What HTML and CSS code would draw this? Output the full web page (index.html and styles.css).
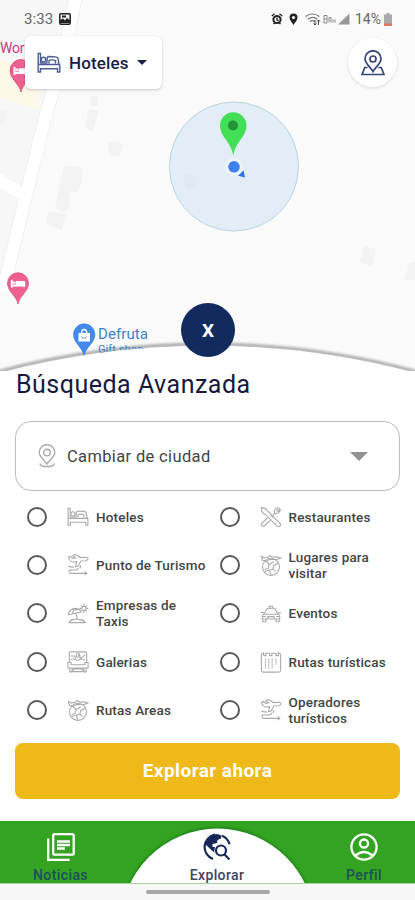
FILE: index.html
```html
<!DOCTYPE html>
<html lang="es">
<head>
<meta charset="utf-8">
<meta name="viewport" content="width=device-width, initial-scale=1">
<title>Búsqueda Avanzada</title>
<link rel="stylesheet" href="styles.css">
</head>
<body>
<svg class="defs" width="0" height="0" aria-hidden="true">
  <symbol id="bed" viewBox="0 0 24 22">
    <path d="M1.2 1.5v18.5h2.300v-3.300h17v3.300h2.300v-6.800q0-1-1-1.600l-.6-4.600q-.4-2-2.400-2.100L11.500 4.500q-1 0-1.200 1.200L9.800 11H3.500V1.500z"/>
    <circle cx="6.500" cy="7.600" r="2.300"/><path d="M1.500 12.500h21M12 8.300q3.500-1 6.500.4v2.700M12 11.400V8.300"/>
  </symbol>
  <symbol id="plane" viewBox="0 0 24 24">
    <path d="M1.500 3.500l2.200-.8 2.800 2 2.800-.5L6.500 1.600l2.400-1 6 3.300 5.800-.4q2.300.4 2.300 1.800t-2.600 2l-5.200.4-3.400 5.600-2.500.4 1.400-5.400-4.300.4q-2 0-3-1.700z"/>
    <path d="M14.500 12v3.500M1.500 13.500l6 .8M2 17.500h7.500q3-.1 3-2.500M3 17.500q-2 1.900.5 3.600H21M19.200 19.200l2.600 1.900-2.600 1.900"/>
  </symbol>
  <symbol id="beach" viewBox="0 0 24 24">
    <path d="M1.500 14q1-6.500 8-7 5 .6 6 3.700L9 12.300zM5.500 13l2-4.200 4.500-.6M9.800 12.300l1.700 7M2.500 22.500q1.500-3.500 5-3.200 2-1.500 5 0 5-.6 7.500 3.200zM18.500 2v2.300M18.500 9.700V12M13.700 7H16M21 7h2.300M15.200 3.700l1.600 1.600M20.200 8.700l1.600 1.600M21.800 3.700l-1.600 1.600"/><circle cx="18.500" cy="7" r="2.300"/>
  </symbol>
  <symbol id="gallery" viewBox="0 0 24 24">
    <path d="M2.500 13V2.500q0-1.500 1.500-1.500h16q1.500 0 1.500 1.500V13M4 5.500h4l2 2.500M12 4l3 4 5-4M4 9.500l4-1 3 2 4-2 5 1.500"/><circle cx="12" cy="4.800" r="2"/>
    <path d="M1 12.500h3.500V15h15v-2.500H23v6H1zM3 18.500v4.300h2.500v-4.300M18.500 18.500v4.300H21v-4.300M5.500 22.500l2-3h9l2 3z"/>
  </symbol>
  <symbol id="globe" viewBox="0 0 24 24">
    <circle cx="12" cy="14" r="9.300"/>
    <path d="M1.500 2.500l3 1.800 4.500-.8 2-2 2 1.700 6-.2 3.500 1.500-4 1.500-8-.2-3 1.800-5-.8zM6 7.500l4 4-1 4-4 1.500M10 11.500l5-3M20 10l-5 2.500-1 4 3 2.500M5 19l5-1.500 2 5M14 16.500l-3 1"/>
  </symbol>
  <symbol id="cutlery" viewBox="0 0 24 24">
    <path d="M1.500 1.800q4.500 0 6.500 3.200L22 19.200q1 1.500-.4 2.700t-2.800 0L6 9.500Q1.500 8 1.500 1.800zM14 10l2-2q-1-3 1-4.800l3-2M22.800 4l-2.200 3q-1.800 1.800-4.500 1.200M18 5.500l3.500-3.500M19.300 6.500l3-3.200M14.500 12.500l-2.800-2.700M11 15.800l-6.200 6q-1.500 1.200-2.800-.1t0-2.800L8.300 13"/>
  </symbol>
  <symbol id="car" viewBox="0 0 24 24">
    <path d="M4.500 13l2.800-5q.7-1.200 2-1.200h5.400q1.300 0 2 1.200l2.800 5M10 6.500V4.700h4v1.800M1 11.500h2.500l1.500 1.800h14l1.500-1.800H23M4.500 13Q2.500 13.500 2.500 15.500v3h19v-3q0-2-2-2.500M3 18.500v3h3.500v-3M17.500 18.500v3H21v-3M3 15.800h3.500M17.500 15.800H21M8.500 18.500v-2.500h7v2.500"/>
  </symbol>
  <symbol id="calendar" viewBox="0 0 24 24">
    <path d="M4 2.500H3.500q-2 0-2 2V21q0 2 2 2h17q2 0 2-2V4.500q0-2-2-2H20M4 1v4h2.500V2.500h4V5H13V2.500h4.500V5H20V1"/><path stroke-dasharray="2 1" d="M6 8.500V19M9.700 8.500V19M13.300 8.500V19M17.500 8.500V15"/>
  </symbol>
  <symbol id="pin-bed" viewBox="0 0 24 34">
    <path d="M12 33C10.500 25 1 20 1 11.500a11 11 0 0 1 22 0C23 20 13.500 25 12 33z" fill="#ee6090" stroke="#d7447a" stroke-width=".7"/>
    <path d="M5.500 8v8M5.500 14h13M18.500 15.500v-5h-8v3" fill="none" stroke="#fff" stroke-width="2"/><path d="M10 9.500h8v4h-8z" fill="#fff"/><circle cx="7.800" cy="11" r="1.400" fill="#fff"/>
  </symbol>
</svg>

<div class="screen">
  <section class="map">
    <svg class="map-canvas" viewBox="0 0 415 371">
      <defs><filter id="soft" x="-5%" y="-50%" width="110%" height="200%"><feGaussianBlur stdDeviation="1.100"/></filter></defs>
      <rect width="415" height="371" fill="#fafafa"/>
      <path d="M0 0H72Q62 55 45 108L0 290z" fill="#f7f7f7"/>
      <path d="M0 60L38 68 40 110 0 98z" fill="#fdf9e8"/>
      <path d="M76 -5Q66 55 46 114L3 290" fill="none" stroke="#f0f0f0" stroke-width="14"/>
      <path d="M76 -5Q66 55 46 114L3 290M-3 179L22 194" fill="none" stroke="#fff" stroke-width="12"/>
      <g fill="#f3f3f4">
        <path d="M88 110h11l-6 21-8-3zM108 143l7-2 8 3-3 12-11-1zM64 167q7-3 18 1v13l-5 12-8-2 1 17-7 4-8-5zM48 212l18 2-4 16-16-6zM0 110h6v13H0zM364 246l12 3-4 17-12-4zM410 262h5v18h-11zM90 98q4-6 8 0v8h-8z"/>
      </g>
      <circle cx="234" cy="166.500" r="64.500" fill="#e2edf7" stroke="#b9d5dd"/>
      <path d="M183 177l6-3 8 3-2 10-9 1z" fill="#dde8f1"/>
      <path d="M233.300 156C231.500 142 220 137 220 125.500a13.200 13.200 0 0 1 26.500 0C246.500 137 235 142 233.300 156z" fill="#43df57"/>
      <circle cx="233" cy="125.500" r="5" fill="#249336"/>
      <circle cx="234" cy="167" r="9" fill="#eff4f9"/>
      <circle cx="234" cy="166.800" r="5.800" fill="#3d82ef"/>
      <path d="M243.500 170.500l1.500 7-7-1.700z" fill="#2d73e9"/>
      <use href="#pin-bed" x="9" y="59" width="24" height="34"/>
      <use href="#pin-bed" x="6.500" y="272" width="23" height="33"/>
      <path d="M-4 372.500A807 807 0 0 1 419 372.500" fill="none" stroke="#b4b4b4" stroke-width="4" filter="url(#soft)"/>
      <path d="M84 356C82.500 347 73.500 343 73.500 334.500a10.700 10.700 0 0 1 21.400 0C95 343 85.500 347 84 356z" fill="#4389ee" stroke="#2f75d8" stroke-width=".6"/>
      <path d="M78.500 333h11.500v8.500H78.500z" fill="#fff"/>
      <path d="M81.500 334q0-4.500 2.700-4.500t2.700 4.500" fill="none" stroke="#fff" stroke-width="1.300"/>
      <path d="M81.500 336.500q2.700 3.500 5.400 0" fill="none" stroke="#4389ee"/>
    </svg>
    <span class="place place-wor">Wor</span>
    <p class="place place-shop">Defruta<small>Gift shop</small></p>

    <header class="status">
      <span class="clock">3:33</span>
      <svg class="shot" viewBox="0 0 12 12"><rect x=".8" y=".8" width="10.400" height="10.400" rx="1" fill="#eee" stroke="#222" stroke-width="1.500"/><path d="M1 10V7l3-1.500 2 2L8 5l3 2.500V10zM3 2.500h4v2H3z" fill="#222"/></svg>
      <span class="spacer"></span>
      <svg class="st-icons" viewBox="0 0 80 14">
        <circle cx="6" cy="7.500" r="3.600" fill="none" stroke="#222" stroke-width="2"/><path d="M.8 4L3.500 1.800M11.200 4L8.500 1.800M2.500 12l1.200-1.300M9.500 12l-1.200-1.300M6 5.500V8l1.800.6" stroke="#222" stroke-width="1.300" fill="none"/>
        <path d="M22.500 13C21 10 18.500 8.500 18.500 5.500a4 4 0 0 1 8 0C26.500 8.500 24 10 22.500 13z" fill="#222"/><circle cx="22.500" cy="5.500" r="1.600" fill="#fff"/>
        <g fill="none" stroke="#777" stroke-width="1.200"><path d="M34.500 4.500q7-5 14 0M36.800 7.200q5-3.500 9.500 0M39 9.500q2.500-1.700 5 0"/></g><path d="M44 8v5M42.500 11.500L44 13l1.500-1.500M47.500 13V8M46 9.500L47.500 8 49 9.500" stroke="#444" fill="none"/>
        <path d="M53 3.500h3v3.500h-3zM53 7v4h3V7M58 10.500V5.500h2v5M62 10.500v-3M64 10.500v-3" stroke="#888" fill="none"/>
        <path d="M67 12.500L78.500 1.500v11z" fill="#999"/>
      </svg>
      <span class="pct">14%</span>
      <svg class="battery" viewBox="0 0 8 13"><path d="M2.500 0h3v1.500H8V13H0V1.500h2.500z" fill="#aaa"/><path d="M0 10.500h8V13H0z" fill="#e4765d"/></svg>
    </header>

    <div class="controls">
      <button class="category">
        <svg class="cat-bed"><use href="#bed"/></svg>
        <span>Hoteles</span>
        <svg class="caret" viewBox="0 0 10 5"><path d="M0 0h10L5 5z"/></svg>
      </button>
      <button class="locate" aria-label="Mi ubicación">
        <svg viewBox="0 0 24 26"><path d="M12 21.500C10.500 18 4 14 4 8.800a8 8 0 0 1 16 0C20 14 13.500 18 12 21.500z"/><circle cx="12" cy="9" r="3"/><path d="M6.500 17.500H3.800L1 24.500h22l-2.800-7h-2.700"/></svg>
      </button>
    </div>

    <svg class="curve" viewBox="0 0 415 40">
      <path d="M-4 36A807 807 0 0 1 419 36V40H-4z" fill="#fff"/>
    </svg>
    <button class="close" aria-label="Cerrar">X</button>
  </section>

  <main class="sheet">
    <h1>Búsqueda Avanzada</h1>
    <div class="select">
      <svg class="city" viewBox="0 0 18 24"><path d="M9 20C7.500 16.500 1.200 13.500 1.200 8.600a7.800 7.800 0 0 1 15.600 0C16.800 13.500 10.500 16.500 9 20z"/><circle cx="9" cy="8.600" r="3.300"/><path d="M2 19.500q0 2.200 3.500 3h7q3.500-.8 3.500-3"/></svg>
      <span>Cambiar de ciudad</span>
      <svg class="drop" viewBox="0 0 18 9"><path d="M0 0h18L9 9z"/></svg>
    </div>
    <div class="options">
      <label class="option"><i class="radio"></i><svg><use href="#bed"/></svg><span>Hoteles</span></label>
      <label class="option"><i class="radio"></i><svg><use href="#cutlery"/></svg><span>Restaurantes</span></label>
      <label class="option"><i class="radio"></i><svg><use href="#plane"/></svg><span>Punto de Turismo</span></label>
      <label class="option"><i class="radio"></i><svg><use href="#globe"/></svg><span>Lugares para<br>visitar</span></label>
      <label class="option"><i class="radio"></i><svg><use href="#beach"/></svg><span>Empresas de<br>Taxis</span></label>
      <label class="option"><i class="radio"></i><svg><use href="#car"/></svg><span>Eventos</span></label>
      <label class="option"><i class="radio"></i><svg><use href="#gallery"/></svg><span>Galerias</span></label>
      <label class="option"><i class="radio"></i><svg><use href="#calendar"/></svg><span>Rutas turísticas</span></label>
      <label class="option"><i class="radio"></i><svg><use href="#globe"/></svg><span>Rutas Areas</span></label>
      <label class="option"><i class="radio"></i><svg><use href="#plane"/></svg><span>Operadores<br>turísticos</span></label>
    </div>
    <button class="explore">Explorar ahora</button>
  </main>

  <nav class="tabs">
    <svg class="hump" viewBox="0 0 200 62">
      <defs><filter id="glow"><feGaussianBlur stdDeviation="1.500"/></filter></defs>
      <circle cx="104.500" cy="104" r="97.500" fill="#1f7a1c" filter="url(#glow)"/><circle cx="104.500" cy="104.600" r="97" fill="#fff"/>
    </svg>
    <a class="tab"><svg viewBox="0 0 28 28" fill="none" stroke="#fff" stroke-width="2.300"><rect x="6.200" y="1.200" width="20.500" height="20.500" rx="1.200"/><path d="M1.200 5.500v21.300h21.500M10 8.500h13M10 12h13M10 15.500h8"/></svg><span>Noticias</span></a>
    <a class="tab active"><svg viewBox="0 0 28 28"><g fill="none" stroke="#172858" stroke-width="2.200"><path d="M10 26A12.600 12.600 0 0 1 12 1.700M19 2.700a12.600 12.600 0 0 1 7.500 8.500"/><circle cx="18" cy="17.500" r="5"/><path d="M21.500 21.500l5 5"/></g><path d="M2 11Q4 1.500 14 1l4.500 1.500-.5 3-3.500 1.500-.5 3-4.500 1v3H12l-1 5.500z" fill="#172858"/></svg><span>Explorar</span></a>
    <a class="tab"><svg viewBox="0 0 28 28" fill="none" stroke="#fff" stroke-width="2.300"><circle cx="14" cy="14" r="12.600"/><circle cx="14" cy="10.500" r="4"/><path d="M5.500 22.500q8.500-7 17 0"/></svg><span>Perfil</span></a>
  </nav>
  <footer class="gesture"><i></i></footer>
</div>
</body>
</html>
```

FILE: styles.css
```css
* { box-sizing: border-box; }
body { margin: 0; background: #fff; font-family: Roboto, "Liberation Sans", sans-serif; }
button { border: 0; padding: 0; font: inherit; }
svg { display: block; flex: none; }
.defs { position: absolute; }

.screen { width: 415px; height: 900px; display: flex; flex-direction: column; overflow: hidden; }

/* Map */
.map { position: relative; height: 371px; flex: none; }
.map-canvas { position: absolute; left: 0; top: 0; width: 415px; height: 371px; }
.place { position: absolute; margin: 0; line-height: 15px; white-space: nowrap; }
.place-wor { left: 0; top: 41px; font-size: 14px; color: #c93c77; letter-spacing: -.2px; }
.place-shop { left: 98px; top: 327px; font-size: 15px; color: #3a82c4; letter-spacing: .1px; }
.place-shop small { display: block; font-size: 11px; line-height: 15px; }

.status { position: relative; display: flex; align-items: center; height: 36px; padding: 2px 23px 0 24px; color: #666; }
.clock { font-size: 15px; letter-spacing: .1px; }
.shot { width: 12px; height: 12px; margin-left: 6px; }
.spacer { flex: 1; }
.st-icons { width: 80px; height: 14px; }
.pct { font-size: 14px; margin: 0 3px 0 4px; }
.battery { width: 8px; height: 13px; }

.controls { position: relative; display: flex; justify-content: space-between; padding: 0 18px 0 25px; }
.category { display: flex; align-items: center; width: 137px; height: 53px; padding: 0 0 0 12px; border-radius: 6px; background: #fff; box-shadow: 0 1px 3px rgba(0,0,0,.2); color: #172049; font-size: 17px; font-weight: 500; letter-spacing: .15px; }
.category span { margin-left: 8px; }
.cat-bed { width: 24px; height: 22px; fill: none; stroke: #4b5e94; stroke-width: 1.4; }
.caret { width: 10px; height: 5px; margin-left: 8px; fill: #172049; }
.locate { width: 49px; height: 49px; margin-top: 2px; border-radius: 50%; background: #fff; box-shadow: 0 1px 3px rgba(0,0,0,.14); display: flex; align-items: center; justify-content: center; }
.locate svg { width: 24px; height: 26px; fill: none; stroke: #35457b; stroke-width: 1.7; }

.curve { position: absolute; left: 0; top: 338px; width: 415px; height: 40px; }
.close { position: absolute; left: 181px; top: 303px; width: 54px; height: 54px; border-radius: 50%; background: #112b5e; color: #fff; font-size: 19px; font-weight: 700; }

/* Search sheet */
.sheet { position: relative; height: 450px; flex: none; padding: 0 15px; }
h1 { margin: 0; padding-left: 1px; font-size: 25px; line-height: 28px; font-weight: 400; letter-spacing: .5px; color: #19193f; }
.select { display: flex; align-items: center; height: 70px; margin-top: 22px; padding: 0 31px 0 22px; border: 1.4px solid #bcbcbc; border-radius: 16px; font-size: 16.5px; letter-spacing: .35px; color: #444; }
.select span { flex: 1; margin-left: 11px; }
.city { width: 18px; height: 24px; fill: none; stroke: #aaa; stroke-width: 1.4; }
.drop { width: 18px; height: 9px; fill: #929292; }

.options { display: grid; grid-template-columns: 192.5px 1fr; grid-auto-rows: 48.2px; margin-top: 2px; }
.option { display: flex; align-items: center; padding-left: 12px; font-size: 13.5px; line-height: 16px; font-weight: 500; letter-spacing: .18px; color: #444; white-space: nowrap; }
.radio { flex: none; width: 20px; height: 20px; border: 2px solid #585858; border-radius: 50%; }
.option svg { width: 22px; height: 22px; margin: 0 7px 0 20px; fill: none; stroke: #aaa; stroke-width: 1.2; }
.explore { display: block; width: 385px; height: 56px; margin-top: 9px; border-radius: 8px; background: #efb91a; color: #fff; font-size: 19px; font-weight: 700; letter-spacing: .42px; }

/* Bottom navigation */
.tabs { position: relative; display: grid; grid-template-columns: 121px 192px 102px; height: 63px; flex: none; background: #33a321; border-bottom: 1px solid #a9d3a0; }
.hump { position: absolute; left: 112.5px; top: 0; width: 200px; height: 62px; }
.tab { position: relative; display: flex; flex-direction: column; align-items: center; padding-top: 12px; font-size: 14px; line-height: 16px; font-weight: 500; letter-spacing: .4px; color: #1e4f5a; }
.tab svg { width: 28px; height: 28px; margin-bottom: 6px; }
.active { color: #40445f; }
.gesture { flex: 1; display: flex; justify-content: center; align-items: flex-start; padding-top: 6px; background: #f7f7f7; }
.gesture i { width: 124px; height: 4px; border-radius: 2px; background: #a8a8a8; }
```
